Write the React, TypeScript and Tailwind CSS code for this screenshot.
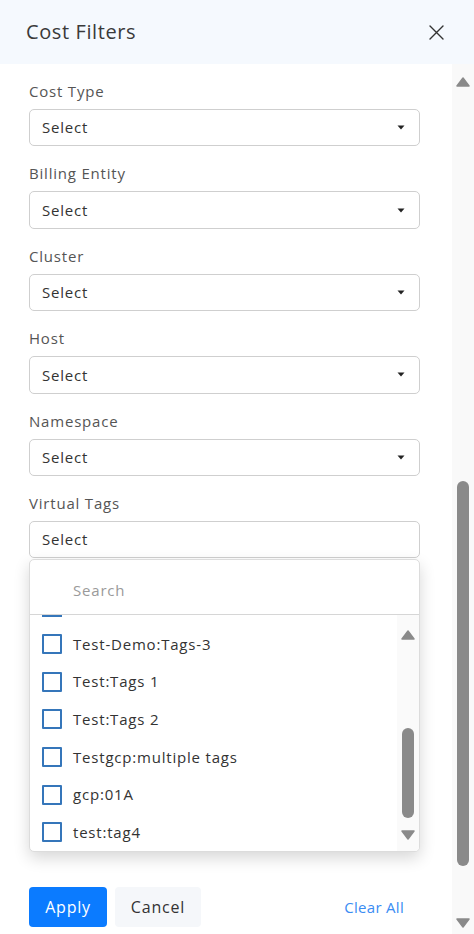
const fields = ["Cost Type", "Billing Entity", "Cluster", "Host", "Namespace"];

const tags = [
	"Test-Demo:Tags-3",
	"Test:Tags 1",
	"Test:Tags 2",
	"Testgcp:multiple tags",
	"gcp:01A",
	"test:tag4",
];

const font = { fontFamily: '"Open Sans", "Noto Sans", sans-serif' };

function Caret() {
	return (
		<svg width="8" height="5" viewBox="0 0 8 5" className="shrink-0">
			<path d="M0.5 0.5 L7.5 0.5 L4 4.5 Z" fill="#222" />
		</svg>
	);
}

function CloseIcon() {
	return (
		<svg width="15" height="15" viewBox="0 0 15 15">
			<path d="M1 1 L14 14 M14 1 L1 14" stroke="#333" strokeWidth="1.4" strokeLinecap="round" />
		</svg>
	);
}

function Arrow({ down = false }: { down?: boolean }) {
	return (
		<svg width="14" height="10" viewBox="0 0 14 10">
			<path
				d={down ? "M1 1 L13 1 L7 9 Z" : "M1 9 L13 9 L7 1 Z"}
				fill="#8a8a8a"
				stroke="#8a8a8a"
				strokeLinejoin="round"
				strokeWidth="1.5"
			/>
		</svg>
	);
}

function SelectBox({ caret = true }: { caret?: boolean }) {
	return (
		<div className="flex h-[37.4px] items-center justify-between rounded-[5px] border border-[#cfcfcf] bg-white pl-3 pr-[14px] text-[15px] text-[#333]">
			<span>Select</span>
			{caret && <Caret />}
		</div>
	);
}

function Field({ label, caret = true }: { label: string; caret?: boolean }) {
	return (
		<div className="flex flex-col pb-[17px]">
			<label className="mb-2 text-[15px] leading-5 text-[#555]">{label}</label>
			<SelectBox caret={caret} />
		</div>
	);
}

function Checkbox() {
	return <span className="h-5 w-5 shrink-0 rounded-[1px] border-2 border-[#3576ba]" />;
}

function TagDropdown() {
	return (
		<div className="absolute left-0 right-0 top-[calc(100%+1px)] z-10 flex h-[293px] flex-col overflow-hidden rounded-[5px] border border-[#dcdcdc] bg-white shadow-[0_6px_16px_rgba(0,0,0,0.16)]">
			<div className="flex h-[55px] shrink-0 items-center border-b border-[#d6d6d6] pl-[43px] pt-[6px] text-[15px] text-[#9a9a9a]">
				Search
			</div>
			<div className="flex min-h-0 flex-1">
				<div className="min-w-0 flex-1 overflow-hidden">
					{/* list is scrolled: only the bottom edge of the previous checkbox shows */}
					<div className="flex h-[10px] items-start pl-3">
						<div className="h-[2px] w-5 bg-[#3576ba]" />
					</div>
					{tags.map((tag) => (
						<div key={tag} className="flex h-[37.6px] items-center gap-[11px] pl-3">
							<Checkbox />
							<span className="text-[15px] text-[#333]">{tag}</span>
						</div>
					))}
				</div>
				<div className="flex w-[22px] shrink-0 flex-col items-center bg-[#fafafa] pb-[11px] pt-[15px]">
					<Arrow />
					<div className="flex w-full flex-1 flex-col items-center">
						<div className="mt-[88px] h-[90px] w-3 rounded-full bg-[#8a8a8a]" />
					</div>
					<Arrow down />
				</div>
			</div>
		</div>
	);
}

export default function App() {
	return (
		<div className="flex h-[934px] w-[474px] flex-col overflow-hidden bg-white tracking-[0.05em]" style={font}>
			<div className="flex h-16 shrink-0 items-center justify-between bg-[#f5f9fe] pl-[26px] pr-[30px]">
				<h2 className="text-[20px] font-medium tracking-[0.03em] text-[#3a3a3a]">Cost Filters</h2>
				<CloseIcon />
			</div>
			<div className="flex min-h-0 flex-1">
				<div className="flex min-w-0 flex-1 flex-col pl-[29px] pr-8 pt-[17px]">
					{fields.map((f) => (
						<Field key={f} label={f} />
					))}
					<div className="relative flex flex-col">
						<label className="mb-2 text-[15px] leading-5 text-[#555]">Virtual Tags</label>
						<SelectBox caret={false} />
						<TagDropdown />
					</div>
					<div className="mt-auto mb-[7px] flex items-center">
						<button className="h-10 w-[78px] rounded-[4px] bg-[#0b7bff] text-[16px] text-white">
							Apply
						</button>
						<button className="ml-2 h-10 w-[86px] rounded-[4px] bg-[#f5f7fa] text-[16px] text-[#333]">
							Cancel
						</button>
						<button className="ml-auto px-4 text-[15px] tracking-[0.02em] text-[#3a8cf3]">Clear All</button>
					</div>
				</div>
				<div className="flex w-[22px] shrink-0 flex-col items-center bg-[#f9f9f9] pb-[6px] pt-[13px]">
					<Arrow />
					<div className="flex w-full flex-1 flex-col items-center">
						<div className="mt-[394px] h-[385px] w-3 rounded-full bg-[#8a8a8a]" />
					</div>
					<Arrow down />
				</div>
			</div>
		</div>
	);
}
